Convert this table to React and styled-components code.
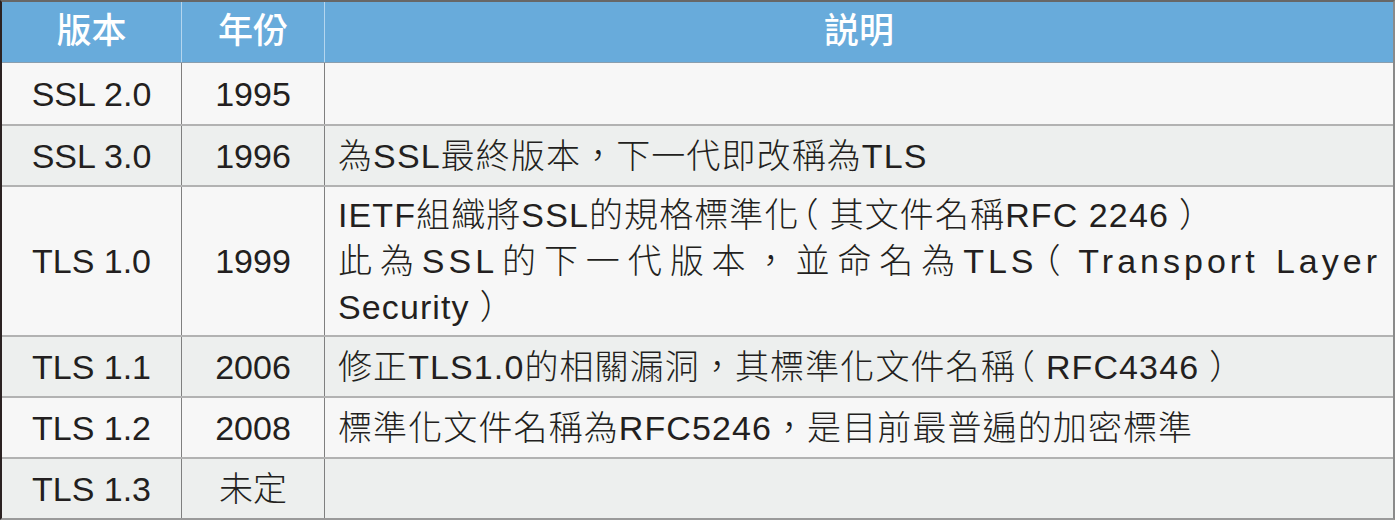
import styled, { createGlobalStyle } from "styled-components";

const GlobalStyle = createGlobalStyle`
  * { box-sizing: border-box; }
  body {
    margin: 0;
    background: #ffffff;
    font-family: "Liberation Sans", "Noto Sans CJK TC", sans-serif;
  }
`;

const Table = styled.div`
  width: 1395px;
  border-style: solid;
  border-width: 2px;
  border-color: #676767 #8a8a8a #9a9a9a #2b2222;
  color: #231f20;
`;

const Row = styled.div`
  display: grid;
  grid-template-columns: 179px 143px 1fr;
  min-height: 61px;
  background: ${(p) => (p.$head ? "#68abdb" : p.$alt ? "#edefee" : "#f7f7f7")};
  border-top: ${(p) => (p.$first ? "none" : "2px solid #b2b2b2")};
  ${(p) => p.$head && "border-bottom: 1px solid #8a9eae;"}
`;

const Cell = styled.div`
  display: flex;
  align-items: center;
  justify-content: ${(p) => (p.$left ? "flex-start" : "center")};
  padding: ${(p) => (p.$left ? "5px 12px 5px 13px" : "0")};
  border-left: ${(p) =>
    p.$divide ? (p.$head ? "1px solid #b4d6ef" : "1px solid #7f7f7f") : "none"};
  font-size: 34px;
  line-height: 46px;
  font-weight: 300;
`;

const HeadCell = styled(Cell)`
  color: #ffffff;
  font-size: 35px;
  font-weight: 500;
  padding-bottom: 3px;
`;

const Desc = styled.div`
  width: 100%;
`;

const Line = styled.div`
  letter-spacing: ${(p) => (p.$spread ? "4px" : "1.1px")};
  text-align: ${(p) => (p.$spread ? "justify" : "left")};
  text-align-last: ${(p) => (p.$spread ? "justify" : "auto")};
  white-space: nowrap;
`;

const Paren = styled.span`
  font-feature-settings: "halt";
  margin-left: ${(p) => (p.$close ? "10px" : "2px")};
  margin-right: ${(p) => (p.$close ? "2px" : "10px")};
`;

const withParens = (text) =>
  text.split(/([（）])/).map((part, i) =>
    part === "（" || part === "）" ? (
      <Paren key={i} $close={part === "）"}>
        {part}
      </Paren>
    ) : (
      part
    )
  );

const rows = [
  { ver: "SSL 2.0", year: "1995", lines: [] },
  { ver: "SSL 3.0", year: "1996", lines: [{ t: "為SSL最終版本，下一代即改稱為TLS" }] },
  {
    ver: "TLS 1.0",
    year: "1999",
    lines: [
      { t: "IETF組織將SSL的規格標準化（其文件名稱RFC 2246）" },
      { t: "此為SSL的下一代版本，並命名為TLS（Transport Layer", spread: true },
      { t: "Security）" },
    ],
  },
  { ver: "TLS 1.1", year: "2006", lines: [{ t: "修正TLS1.0的相關漏洞，其標準化文件名稱（RFC4346）" }] },
  { ver: "TLS 1.2", year: "2008", lines: [{ t: "標準化文件名稱為RFC5246，是目前最普遍的加密標準" }] },
  { ver: "TLS 1.3", year: "未定", lines: [] },
];

export default function App() {
  return (
    <>
      <GlobalStyle />
      <Table>
        <Row $head $first>
          <HeadCell $head>版本</HeadCell>
          <HeadCell $head $divide>年份</HeadCell>
          <HeadCell $head $divide>説明</HeadCell>
        </Row>
        {rows.map((r, i) => (
          <Row key={r.ver} $alt={i % 2 === 1} $first={i === 0}>
            <Cell>{r.ver}</Cell>
            <Cell $divide>{r.year}</Cell>
            <Cell $divide $left>
              <Desc>
                {r.lines.map((l) => (
                  <Line key={l.t} $spread={l.spread}>
                    {withParens(l.t)}
                  </Line>
                ))}
              </Desc>
            </Cell>
          </Row>
        ))}
      </Table>
    </>
  );
}
